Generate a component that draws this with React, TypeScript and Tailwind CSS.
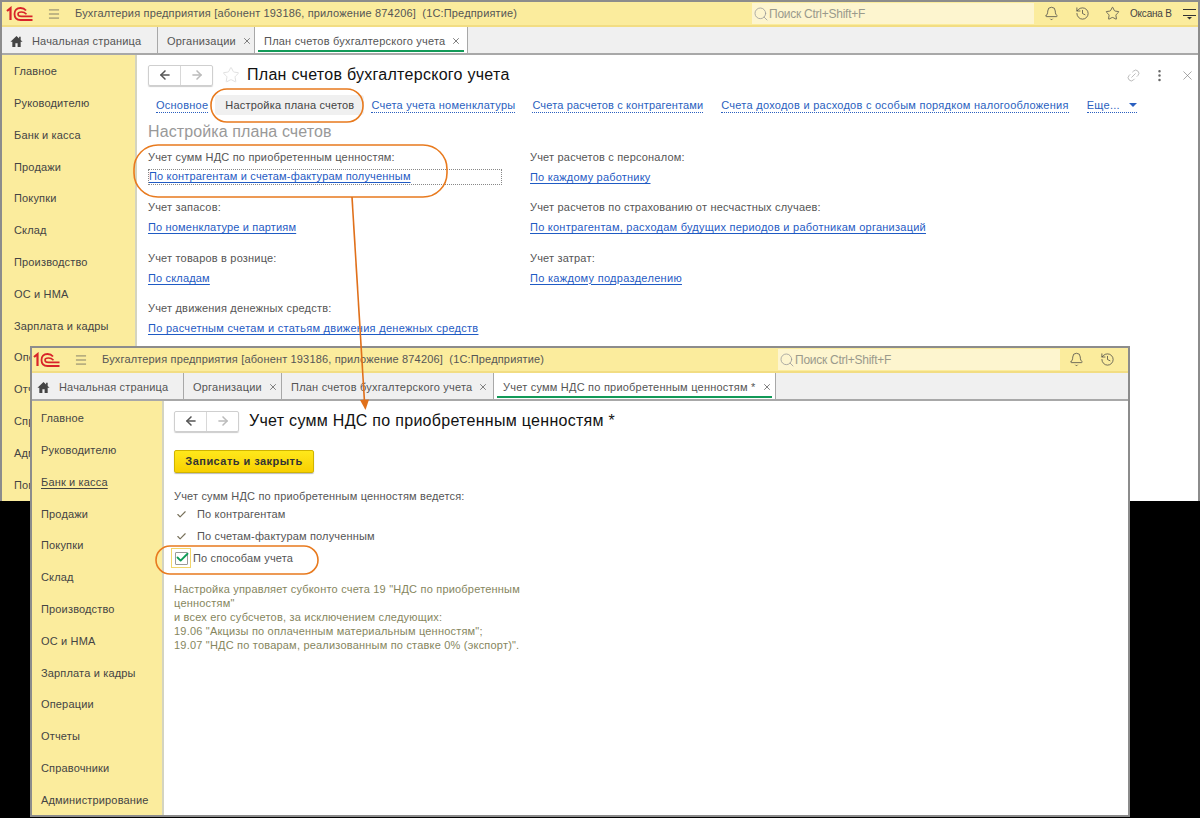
import { ArrowLeft, ArrowRight, Bell, Check, History, Link2, Menu, MoreVertical, Search, Star, X } from 'lucide-react'

const backMenu = ['Главное', 'Руководителю', 'Банк и касса', 'Продажи', 'Покупки', 'Склад', 'Производство', 'ОС и НМА', 'Зарплата и кадры', 'Операции', 'Отчеты', 'Справочники', 'Администрирование', 'Помощь']
const frontMenu = backMenu.slice(0, 13)

const backTabs = [
  { title: 'Организации', width: 'w-[97px]' },
  { title: 'План счетов бухгалтерского учета', width: 'w-[213px]', active: true },
]
const frontTabs = [
  { title: 'Организации', width: 'w-[98px]' },
  { title: 'План счетов бухгалтерского учета', width: 'w-[212px]' },
  { title: 'Учет сумм НДС по приобретенным ценностям *', width: 'w-[282px]', active: true },
]

const settingsLeft = [
  { label: 'Учет сумм НДС по приобретенным ценностям:', value: 'По контрагентам и счетам-фактурам полученным', spacing: 'tracking-[0.17px]' },
  { label: 'Учет запасов:', value: 'По номенклатуре и партиям', spacing: 'tracking-[0.17px]' },
  { label: 'Учет товаров в рознице:', value: 'По складам', spacing: 'tracking-[0.17px]' },
  { label: 'Учет движения денежных средств:', value: 'По расчетным счетам и статьям движения денежных средств', spacing: 'tracking-[0.28px]' },
]
const settingsRight = [
  { label: 'Учет расчетов с персоналом:', value: 'По каждому работнику', spacing: 'tracking-[0.2px]' },
  { label: 'Учет расчетов по страхованию от несчастных случаев:', value: 'По контрагентам, расходам будущих периодов и работникам организаций', spacing: 'tracking-[0.245px]' },
  { label: 'Учет затрат:', value: 'По каждому подразделению', spacing: 'tracking-[0.3px]' },
]

function Logo() {
  return (
    <svg width="27" height="16" viewBox="0 0 27 16" fill="none" className="shrink-0">
      <path d="M1 5 L4.5 2.2 V14" stroke="#d8232a" strokeWidth="2.2" />
      <path d="M20 4.5 C18.5 2.6 16.5 2 14.5 2 C10.5 2 8.5 4.5 8.5 8 C8.5 11.5 10.5 14 14.5 14 H26.5" stroke="#d8232a" strokeWidth="1.8" />
      <path d="M20.5 8.2 C19 6.6 17 6 15.5 6 C13.5 6 12 6.8 12 8 C12 9.5 13.5 10.4 15.5 10.4 H26.5" stroke="#d8232a" strokeWidth="1.6" />
    </svg>
  )
}

function HomeIcon() {
  return (
    <svg width="13" height="13" viewBox="0 0 14 14" className="shrink-0">
      <path d="M7 1 L0.5 7.2 H2.5 V13 H5.8 V9 H8.2 V13 H11.5 V7.2 H13.5 L11.5 5.3 V2 H9.8 V3.7 Z" fill="#444" />
    </svg>
  )
}

function MoreMenuIcon() {
  return (
    <svg width="13" height="13" viewBox="0 0 13 13" className="shrink-0 ml-[11px]">
      <path d="M0 2.5 H13 M0 8.5 H13" stroke="#333" strokeWidth="1.2" />
      <path d="M4 10 H9 L6.5 12.5 Z" fill="#333" />
    </svg>
  )
}

function TitleBar({ logoGap, searchGap, bellGap, extended }: { logoGap: string; searchGap: string; bellGap: string; extended?: boolean }) {
  return (
    <div className="flex items-center h-[25px] bg-[#fbec9d] border-b-2 border-[#f2dd83] shrink-0">
      <div className={logoGap}><Logo /></div>
      <Menu className="w-[14px] h-[14px] ml-[14px] text-[#555] shrink-0" strokeWidth={1.2} />
      <span className={`ml-[14px] text-[#555] tracking-[0.16px] whitespace-nowrap ${searchGap}`}>Бухгалтерия предприятия [абонент 193186, приложение 874206]&nbsp; (1С:Предприятие)</span>
      <div className="flex items-center h-[21px] w-[282px] bg-[#fdf5cf] text-[#9a9a8c] text-[12px] tracking-[-0.25px] shrink-0">
        <Search className="w-[16px] h-[16px] ml-[1px] text-[#999]" strokeWidth={1.2} />
        <span>Поиск Ctrl+Shift+F</span>
      </div>
      <Bell className={`w-[15px] h-[15px] text-[#444] shrink-0 ${bellGap}`} strokeWidth={1.2} />
      <History className="w-[15px] h-[15px] ml-[16px] text-[#444] shrink-0" strokeWidth={1.2} />
      {extended && (
        <>
          <Star className="w-[15px] h-[15px] ml-[15px] text-[#444] shrink-0" strokeWidth={1.2} />
          <span className="ml-[10px] text-[#444] text-[10px] tracking-[-0.2px] whitespace-nowrap">Оксана В</span>
          <MoreMenuIcon />
        </>
      )}
    </div>
  )
}

function TabBar({ homeWidth, homeGap, tabs }: { homeWidth: string; homeGap: string; tabs: { title: string; width: string; active?: boolean }[] }) {
  return (
    <div className="flex h-[28px] bg-[#f0f0f0] border-b-2 border-[#a8a8a8] shrink-0 text-[#555]">
      <div className={`flex items-center pt-[2px] border-r border-[#a8a8a8] shrink-0 ${homeWidth} ${homeGap}`}>
        <HomeIcon />
        <span className="ml-[9px] tracking-[0.16px] whitespace-nowrap">Начальная страница</span>
      </div>
      {tabs.map(tab => (
        <div key={tab.title} className={`relative flex items-center pt-[2px] pl-[9px] border-r border-[#a8a8a8] shrink-0 ${tab.width} ${tab.active ? 'bg-white' : ''}`}>
          <span className="tracking-[0.22px] whitespace-nowrap">{tab.title}</span>
          <X className="w-[10px] h-[10px] ml-[6px] text-[#666] shrink-0" />
          {tab.active && <div className="absolute left-[3px] right-[3px] bottom-[1px] h-[2px] bg-[#129a58]" />}
        </div>
      ))}
    </div>
  )
}

function Sidebar({ items, width, itemPad, top, current }: { items: string[]; width: string; itemPad: string; top: string; current?: string }) {
  return (
    <div className={`flex flex-col bg-[#fbec9d] border-r-2 border-[#d4d4c0] shrink-0 text-[#444] ${width} ${top}`}>
      {items.map(item => (
        <div key={item} className={`flex items-center h-[31.8px] tracking-[0.16px] whitespace-nowrap ${itemPad}`}>
          <span className={item === current ? 'underline underline-offset-2' : ''}>{item}</span>
        </div>
      ))}
    </div>
  )
}

function NavButtons() {
  return (
    <div className="flex h-[21px] w-[65px] rounded-[2px] border border-[#cfcfcf] shadow-[0_1px_1px_#ccc] shrink-0">
      <div className="flex flex-1 items-center justify-center border-r border-[#d8d8d8]">
        <ArrowLeft className="w-[14px] h-[14px] text-[#555]" strokeWidth={2.6} />
      </div>
      <div className="flex flex-1 items-center justify-center">
        <ArrowRight className="w-[14px] h-[14px] text-[#bbb]" strokeWidth={2.6} />
      </div>
    </div>
  )
}

function SettingGroup({ label, value, spacing, focused }: { label: string; value: string; spacing: string; focused?: boolean }) {
  return (
    <div className="flex flex-col h-[50.4px]">
      <span className="h-[20px] leading-[15px] text-[#555] tracking-[0.19px] whitespace-nowrap">{label}</span>
      <div className={`h-[16px] -mt-px whitespace-nowrap ${focused ? 'w-[354px] border border-dotted border-[#888] leading-[13px]' : 'leading-[16px]'}`}>
        <span className={`text-[#1f5bc4] underline underline-offset-2 ${spacing}`}>{value}</span>
      </div>
    </div>
  )
}

function NavLink({ title, className }: { title: string; className: string }) {
  return <span className={`text-[#2a5fc0] border-b border-dotted border-[#2a5fc0] leading-[14px] whitespace-nowrap ${className}`}>{title}</span>
}

function BackWindow() {
  return (
    <div className="absolute left-0 top-0 flex flex-col w-[1200px] h-[501px] bg-white border-2 border-b-0 border-[#8c8c8c] overflow-hidden">
      <TitleBar logoGap="ml-[4px]" searchGap="w-[677px] shrink-0" bellGap="ml-[10px]" extended />
      <TabBar homeWidth="w-[156px]" homeGap="pl-[8px]" tabs={backTabs} />
      <div className="flex flex-1">
        <Sidebar items={backMenu} width="w-[135px]" itemPad="pl-[12px]" top="pt-[0.5px]" />
        <div className="flex-1 flex flex-col pl-[11px] pr-[3px] pt-[8px]">
          <div className="flex items-center h-[24px]">
            <NavButtons />
            <Star className="w-[18px] h-[18px] ml-[9px] text-[#ddd] shrink-0" strokeWidth={1.2} />
            <span className="ml-[7px] text-[16px] text-[#111] tracking-[0.28px] whitespace-nowrap">План счетов бухгалтерского учета</span>
            <Link2 className="w-[15px] h-[15px] ml-auto -rotate-45 text-[#aaa] shrink-0" strokeWidth={1.2} />
            <MoreVertical className="w-[15px] h-[15px] ml-[11px] text-[#666] shrink-0" strokeWidth={2} />
            <X className="w-[15px] h-[15px] ml-[13px] text-[#777] shrink-0" strokeWidth={1} />
          </div>
          <div className="flex items-center h-[20px] mt-[8px] pl-[8px]">
            <NavLink title="Основное" className="tracking-[0.24px]" />
            <span className="ml-[7px] px-[10px] h-[20px] leading-[20px] rounded-[3px] bg-[#f0f0f0] text-[#444] tracking-[0.2px] whitespace-nowrap">Настройка плана счетов</span>
            <NavLink title="Счета учета номенклатуры" className="ml-[7px] tracking-[0.24px]" />
            <NavLink title="Счета расчетов с контрагентами" className="ml-[17px] tracking-[0.16px]" />
            <NavLink title="Счета доходов и расходов с особым порядком налогообложения" className="ml-[18px] tracking-[0.26px]" />
            <span className="flex items-center ml-[18px] w-[50px] justify-between border-b border-dotted border-[#2a5fc0] leading-[14px] text-[#2a5fc0] tracking-[0.28px]">
              Еще...
              <span className="w-0 h-0 border-x-[4px] border-t-[4px] border-x-transparent border-t-[#2a5fc0]" />
            </span>
          </div>
          <div className="mt-[6px] h-[22px] leading-[22px] text-[16px] text-[#999] tracking-[0.1px]">Настройка плана счетов</div>
          <div className="flex mt-[7px]">
            <div className="w-[382px] shrink-0">
              {settingsLeft.map((group, i) => <SettingGroup key={group.label} {...group} focused={i === 0} />)}
            </div>
            <div>
              {settingsRight.map(group => <SettingGroup key={group.label} {...group} />)}
            </div>
          </div>
        </div>
      </div>
    </div>
  )
}

function FrontWindow() {
  return (
    <div className="absolute left-[30px] top-[346px] flex flex-col w-[1100px] h-[471px] bg-white border-2 border-[#8c8c8c] overflow-hidden">
      <TitleBar logoGap="ml-[1px]" searchGap="w-[676px] shrink-0" bellGap="ml-[9px]" />
      <TabBar homeWidth="w-[152px]" homeGap="pl-[5px]" tabs={frontTabs} />
      <div className="flex flex-1">
        <Sidebar items={frontMenu} width="w-[132px]" itemPad="pl-[9px]" top="pt-[1.5px]" current="Банк и касса" />
        <div className="flex-1 flex flex-col pl-[10px] pt-[8px]">
          <div className="flex items-center h-[24px]">
            <NavButtons />
            <span className="ml-[10px] text-[16px] text-[#111] tracking-[0.29px] whitespace-nowrap">Учет сумм НДС по приобретенным ценностям *</span>
          </div>
          <button className="mt-[17px] w-[140px] h-[23px] rounded-[2px] border border-[#d0b400] bg-gradient-to-b from-[#ffe81a] to-[#f8d000] text-[#333] font-bold tracking-[0.46px] shadow-[0_1px_1px_#bbb]">Записать и закрыть</button>
          <div className="mt-[15px] h-[16px] leading-[16px] text-[#555] tracking-[0.17px]">Учет сумм НДС по приобретенным ценностям ведется:</div>
          <div className="flex items-center h-[22px] -mt-px pl-[2px] text-[#555] tracking-[0.17px]">
            <Check className="w-[11px] h-[11px] text-[#77705a]" strokeWidth={2.5} />
            <span className="ml-[10px]">По контрагентам</span>
          </div>
          <div className="flex items-center h-[22px] pl-[2px] text-[#555] tracking-[0.17px]">
            <Check className="w-[11px] h-[11px] text-[#77705a]" strokeWidth={2.5} />
            <span className="ml-[10px]">По счетам-фактурам полученным</span>
          </div>
          <div className="flex items-center h-[22px] -ml-[3px] text-[#555] tracking-[0.17px]">
            <div className="flex items-center justify-center w-[20px] h-[20px] border border-[#f2d56a]">
              <div className="relative w-[13px] h-[13px] border border-[#999] rounded-[1px]">
                <Check className="absolute -top-[3px] -left-[1px] w-[15px] h-[15px] text-[#0f9d58]" strokeWidth={3} />
              </div>
            </div>
            <span className="ml-[2px]">По способам учета</span>
          </div>
          <p className="mt-[13px] w-[350px] text-[#86865e] leading-[14px] tracking-[0.2px]">
            Настройка управляет субконто счета 19 "НДС по приобретенным ценностям"<br />
            и всех его субсчетов, за исключением следующих:<br />
            19.06 "Акцизы по оплаченным материальным ценностям";<br />
            <span className="whitespace-nowrap">19.07 "НДС по товарам, реализованным по ставке 0% (экспорт)".</span>
          </p>
        </div>
      </div>
    </div>
  )
}

function Marks() {
  return (
    <svg width="1200" height="818" viewBox="0 0 1200 818" fill="none" className="absolute left-0 top-0 pointer-events-none">
      <rect x="211" y="89" width="152" height="33" rx="16" stroke="#e87a1e" strokeWidth="1.6" />
      <rect x="134" y="145" width="313" height="52" rx="24" stroke="#e87a1e" strokeWidth="1.6" />
      <rect x="156" y="546" width="162" height="28" rx="14" stroke="#e87a1e" strokeWidth="1.6" />
      <path d="M352 197 L364.5 402" stroke="#e0701a" strokeWidth="1.6" />
      <path d="M360 400 L369 399.5 L365.5 410 Z" fill="#e0701a" />
    </svg>
  )
}

export default function App() {
  return (
    <div className="relative w-[1200px] h-[818px] overflow-hidden bg-black font-['Liberation_Sans',Arial,sans-serif] text-[11px]">
      <BackWindow />
      <FrontWindow />
      <Marks />
    </div>
  )
}
